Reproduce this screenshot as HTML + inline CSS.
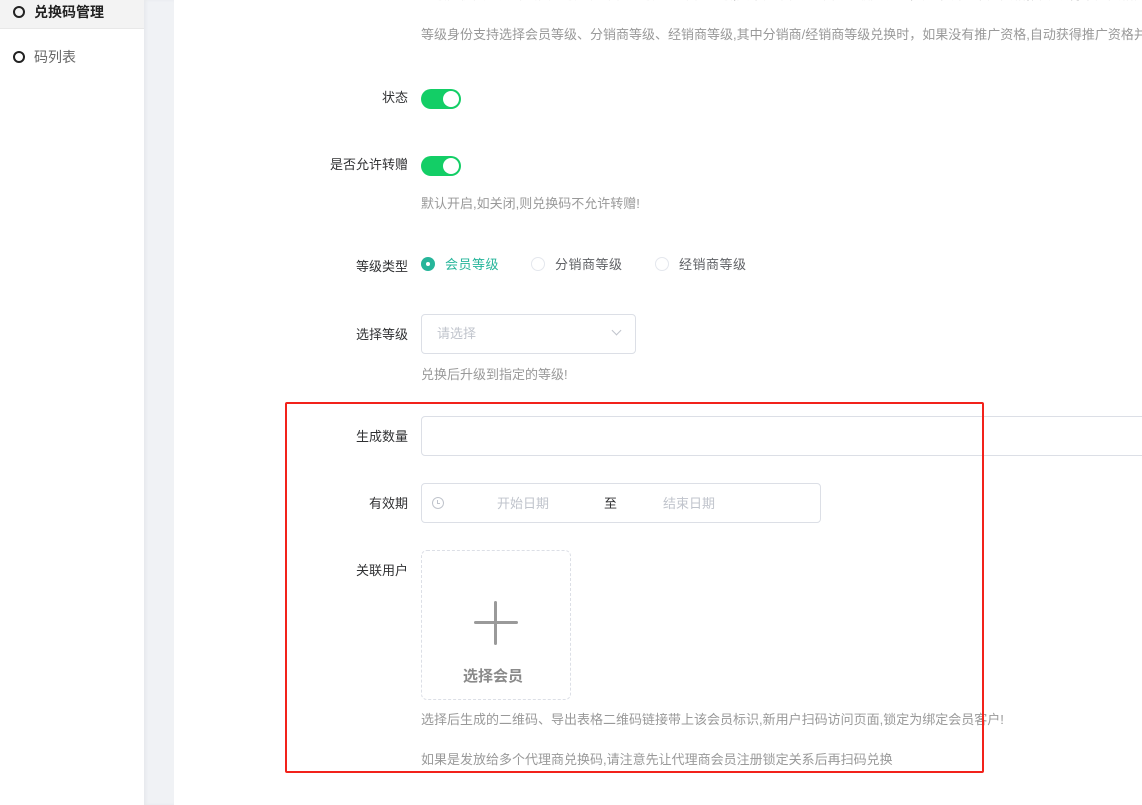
<!DOCTYPE html>
<html><head><meta charset="utf-8"><style>
*{margin:0;padding:0;box-sizing:border-box}
body{width:1142px;height:805px;overflow:hidden;position:relative;background:#fff;font-family:"Liberation Sans","Noto Sans CJK SC",sans-serif;font-size:13px;color:#303133}
.a{position:absolute;white-space:nowrap}
.t{margin-top:-2px}
.side{left:0;top:0;width:144px;height:805px;background:#fff}
.gap{left:144px;top:0;width:30px;height:805px;background:#f0f2f5;box-shadow:inset 2px 0 3px rgba(0,0,0,.04)}
.ci{width:12px;height:12px;border:2px solid #222;border-radius:50%}
.lbl{right:734px;font-size:13px;color:#303133;margin-top:-2px}
.tip{left:421px;font-size:13px;color:#999;margin-top:-2px}
.sw{width:40px;height:20px;border-radius:10px;background:#13ce66}
.sw:after{content:"";position:absolute;right:2px;top:2px;width:16px;height:16px;border-radius:50%;background:#fff}
.rd{width:14px;height:14px;border-radius:50%;border:1px solid #e4e7ed}
.box{border:1px solid #dcdfe6;border-radius:4px}
</style></head><body>
<div class="a side"></div>
<div class="a" style="left:0;top:0;width:144px;height:29px;background:#f3f3f3;border-bottom:1px solid #e8e8e8"></div>
<div class="a ci" style="left:13px;top:6px"></div>
<div class="a t" style="left:34px;top:4px;font-size:14px;font-weight:bold;color:#222">兑换码管理</div>
<div class="a ci" style="left:13px;top:51px"></div>
<div class="a t" style="left:34px;top:49px;font-size:14px;color:#666">码列表</div>
<div class="a gap"></div>

<div class="a tip" style="top:-14px;color:#aaa">等级身份支持选择会员等级、分销商等级、经销商等级,其中分销商/经销商等级兑换时，如果没有推广资格,自动获得推广资格并</div>
<div class="a tip" style="top:26px">等级身份支持选择会员等级、分销商等级、经销商等级,其中分销商/经销商等级兑换时，如果没有推广资格,自动获得推广资格并</div>

<div class="a lbl" style="top:89px">状态</div>
<div class="a sw" style="left:421px;top:89px"></div>

<div class="a lbl" style="top:156px">是否允许转赠</div>
<div class="a sw" style="left:421px;top:156px"></div>
<div class="a tip" style="top:195px">默认开启,如关闭,则兑换码不允许转赠!</div>

<div class="a lbl" style="top:258px">等级类型</div>
<div class="a" style="left:421px;top:257px;width:14px;height:14px;border-radius:50%;background:#26b59a"></div>
<div class="a" style="left:426px;top:262px;width:4px;height:4px;border-radius:50%;background:#fff"></div>
<div class="a t" style="left:445px;top:256px;color:#26b59a;letter-spacing:.5px">会员等级</div>
<div class="a rd" style="left:531px;top:257px"></div>
<div class="a t" style="left:555px;top:256px;color:#606266;letter-spacing:.5px">分销商等级</div>
<div class="a rd" style="left:655px;top:257px"></div>
<div class="a t" style="left:679px;top:256px;color:#606266;letter-spacing:.5px">经销商等级</div>

<div class="a lbl" style="top:326px">选择等级</div>
<div class="a box" style="left:421px;top:314px;width:215px;height:40px"></div>
<div class="a t" style="left:437px;top:325px;color:#c0c4cc">请选择</div>
<div class="a" style="left:613px;top:327px;width:7px;height:7px;border-right:1px solid #c0c4cc;border-bottom:1px solid #c0c4cc;transform:rotate(45deg)"></div>
<div class="a tip" style="top:366px">兑换后升级到指定的等级!</div>

<div class="a lbl" style="top:428px">生成数量</div>
<div class="a box" style="left:421px;top:416px;width:730px;height:40px"></div>

<div class="a lbl" style="top:495px">有效期</div>
<div class="a box" style="left:421px;top:483px;width:400px;height:40px"></div>
<div class="a" style="left:432px;top:497px;width:12px;height:12px;border:1px solid #c0c4cc;border-radius:50%"></div>
<div class="a" style="left:437px;top:500px;width:3px;height:4px;border-left:1px solid #c0c4cc;border-bottom:1px solid #c0c4cc"></div>
<div class="a t" style="left:497px;top:495px;color:#c0c4cc">开始日期</div>
<div class="a t" style="left:604px;top:495px;color:#303133">至</div>
<div class="a t" style="left:663px;top:495px;color:#c0c4cc">结束日期</div>

<div class="a lbl" style="top:562px">关联用户</div>
<div class="a" style="left:421px;top:550px;width:150px;height:150px;border:1px dashed #dcdfe6;border-radius:6px"></div>
<div class="a" style="left:474px;top:621px;width:44px;height:3px;background:#9a9a9a;border-radius:2px"></div>
<div class="a" style="left:494px;top:601px;width:3px;height:44px;background:#9a9a9a;border-radius:2px"></div>
<div class="a t" style="left:463px;top:667px;font-size:15px;font-weight:bold;color:#8a8a8a">选择会员</div>
<div class="a tip" style="top:711px">选择后生成的二维码、导出表格二维码链接带上该会员标识,新用户扫码访问页面,锁定为绑定会员客户!</div>
<div class="a tip" style="top:751px">如果是发放给多个代理商兑换码,请注意先让代理商会员注册锁定关系后再扫码兑换</div>

<div class="a" style="left:285px;top:402px;width:699px;height:371px;border:2px solid #f2221b;border-radius:2px"></div>
</body></html>
